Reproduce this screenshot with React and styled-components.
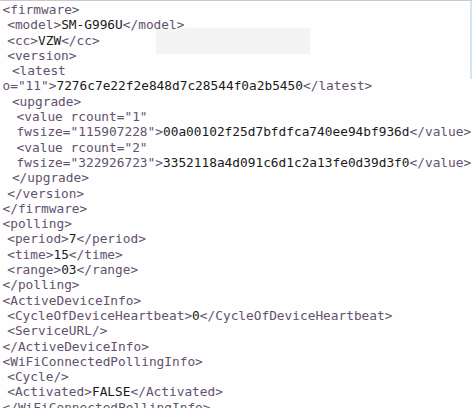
import styled, { createGlobalStyle } from "styled-components";

const GlobalStyle = createGlobalStyle`
  html, body {
    margin: 0;
    padding: 0;
    background: #ffffff;
  }
`;

const Screen = styled.div`
  position: relative;
  width: 472px;
  height: 408px;
  overflow: hidden;
  background: #fefefe;
  border-top: 1px solid #c9c9c9;
  box-sizing: border-box;
  padding-top: 1px;
  font-family: "DejaVu Sans Mono", "Liberation Mono", monospace;
  font-size: 12.8px;
  line-height: 15.3px;
`;

const Line = styled.div`
  position: relative;
  white-space: pre;
  padding-left: ${(p) => 2.5 + p.$indent * 4.7}px;
  color: #63526e;
`;

const Text = styled.span`
  color: #1a1a1a;
`;

const Redact = styled.div`
  position: absolute;
  left: 156px;
  top: 27px;
  width: 154px;
  height: 26px;
  background: #f4f4f4;
`;

const Scroll = styled.div`
  position: absolute;
  right: 0;
  top: 0;
  width: 2px;
  height: 78px;
  background: #d6e4f0;
`;

const lines = [
  [0, "<firmware>"],
  [1, "<model>SM-G996U</model>"],
  [1, "<cc>VZW</cc>"],
  [1, "<version>"],
  [2, "<latest"],
  [0, 'o="11">7276c7e22f2e848d7c28544f0a2b5450</latest>'],
  [2, "<upgrade>"],
  [3, '<value rcount="1"'],
  [3, 'fwsize="115907228">00a00102f25d7bfdfca740ee94bf936d</value>'],
  [3, '<value rcount="2"'],
  [3, 'fwsize="322926723">3352118a4d091c6d1c2a13fe0d39d3f0</value>'],
  [2, "</upgrade>"],
  [1, "</version>"],
  [0, "</firmware>"],
  [0, "<polling>"],
  [1, "<period>7</period>"],
  [1, "<time>15</time>"],
  [1, "<range>03</range>"],
  [0, "</polling>"],
  [0, "<ActiveDeviceInfo>"],
  [1, "<CycleOfDeviceHeartbeat>0</CycleOfDeviceHeartbeat>"],
  [1, "<ServiceURL/>"],
  [0, "</ActiveDeviceInfo>"],
  [0, "<WiFiConnectedPollingInfo>"],
  [1, "<Cycle/>"],
  [1, "<Activated>FALSE</Activated>"],
  [0, "</WiFiConnectedPollingInfo>"],
];

// text between > and < is content, the rest is markup
function renderLine(src) {
  const parts = src.split(/(?<=>)([^<>]+)(?=<)/);
  return parts.map((p, i) =>
    i % 2 === 1 ? <Text key={i}>{p}</Text> : <span key={i}>{p}</span>
  );
}

export default function App() {
  return (
    <>
      <GlobalStyle />
      <Screen>
        <Redact />
        {lines.map(([indent, src], i) => (
          <Line key={i} $indent={indent}>
            {renderLine(src)}
          </Line>
        ))}
        <Scroll />
      </Screen>
    </>
  );
}
